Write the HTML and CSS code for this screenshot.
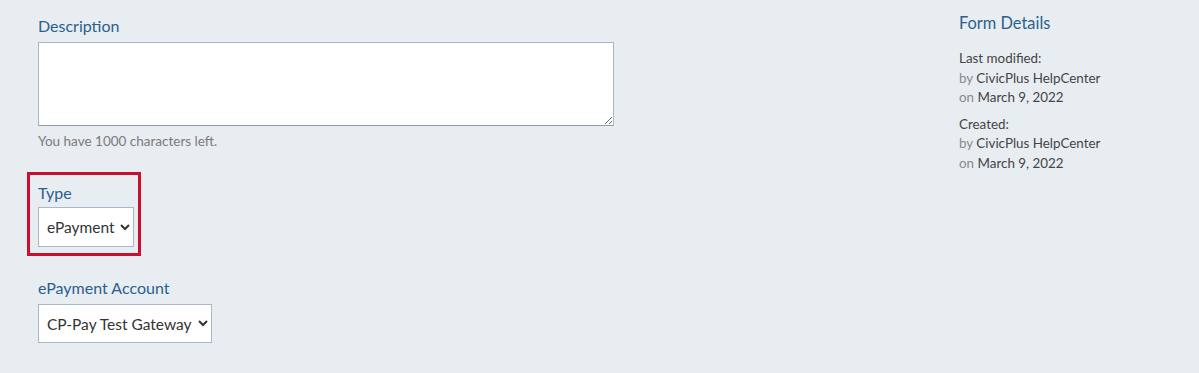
FILE: index.html
```html
<!DOCTYPE html>
<html lang="en">
<head>
<meta charset="utf-8">
<title>Form Settings</title>
<link rel="stylesheet" href="styles.css">
</head>
<body>
<div class="page">
  <main class="form-col">
    <div class="field">
      <label class="label" for="desc">Description</label>
      <textarea id="desc" class="textarea"></textarea>
      <div class="help">You have 1000 characters left.</div>
    </div>
    <div class="highlight">
      <label class="label" for="type">Type</label>
      <select id="type" class="select">
        <option>ePayment</option>
      </select>
    </div>
    <div class="field field-account">
      <label class="label" for="acct">ePayment Account</label>
      <select id="acct" class="select">
        <option>CP-Pay Test Gateway</option>
      </select>
    </div>
  </main>
  <aside class="details">
    <h2 class="details-title">Form Details</h2>
    <div class="details-group">
      <div class="details-head">Last modified:</div>
      <div class="details-line"><span class="muted">by</span> CivicPlus HelpCenter</div>
      <div class="details-line"><span class="muted">on</span> March 9, 2022</div>
    </div>
    <div class="details-group">
      <div class="details-head">Created:</div>
      <div class="details-line"><span class="muted">by</span> CivicPlus HelpCenter</div>
      <div class="details-line"><span class="muted">on</span> March 9, 2022</div>
    </div>
  </aside>
</div>
</body>
</html>
```
FILE: styles.css
```css
html, body {
  margin: 0;
  padding: 0;
}
body {
  background: #e8edf2;
  font-family: Lato, "Open Sans", sans-serif;
  color: #444;
  height: 373px;
  overflow: hidden;
}
.page {
  display: flex;
  padding: 0 0 0 38px;
}
.form-col {
  width: 921px;
  padding-top: 16px;
}
.field {
  display: flex;
  flex-direction: column;
  align-items: flex-start;
}
.label {
  display: block;
  font-size: 16px;
  line-height: 20px;
  color: #2b5f8e;
  margin-bottom: 6px;
}
.textarea {
  box-sizing: border-box;
  width: 576px;
  height: 84px;
  border: 1px solid #a9b8c8;
  border-bottom-color: #8f9cab;
  background: #fff;
  margin: 0;
  resize: vertical;
}
.help {
  font-size: 13.5px;
  line-height: 16px;
  color: #7a7a7a;
  margin-top: 7px;
}
.highlight {
  margin-top: 23px;
  margin-left: -11px;
  width: fit-content;
  border: 3px solid #c8102e;
  padding: 8px 4px 6px 8px;
  display: flex;
  flex-direction: column;
  align-items: flex-start;
}
.highlight .label {
  margin-bottom: 4px;
}
.select {
  box-sizing: border-box;
  height: 40px;
  border: 1px solid #a9b8c8;
  border-radius: 0;
  background-color: #fff;
  font-family: inherit;
  font-size: 15.5px;
  color: #333;
  padding: 0 2px 0 4px;
  margin: 0;
}
.field-account {
  margin-top: 22px;
}
.field-account .select {
  height: 39px;
}
.details {
  padding-top: 13px;
}
.details-title {
  margin: 0 0 16px;
  font-weight: normal;
  font-size: 16.4px;
  line-height: 20px;
  color: #2b5f8e;
}
.details-group {
  font-size: 13.4px;
  line-height: 19.5px;
  color: #444;
  margin-bottom: 7px;
}
.muted {
  color: #8a8a8a;
}
```
